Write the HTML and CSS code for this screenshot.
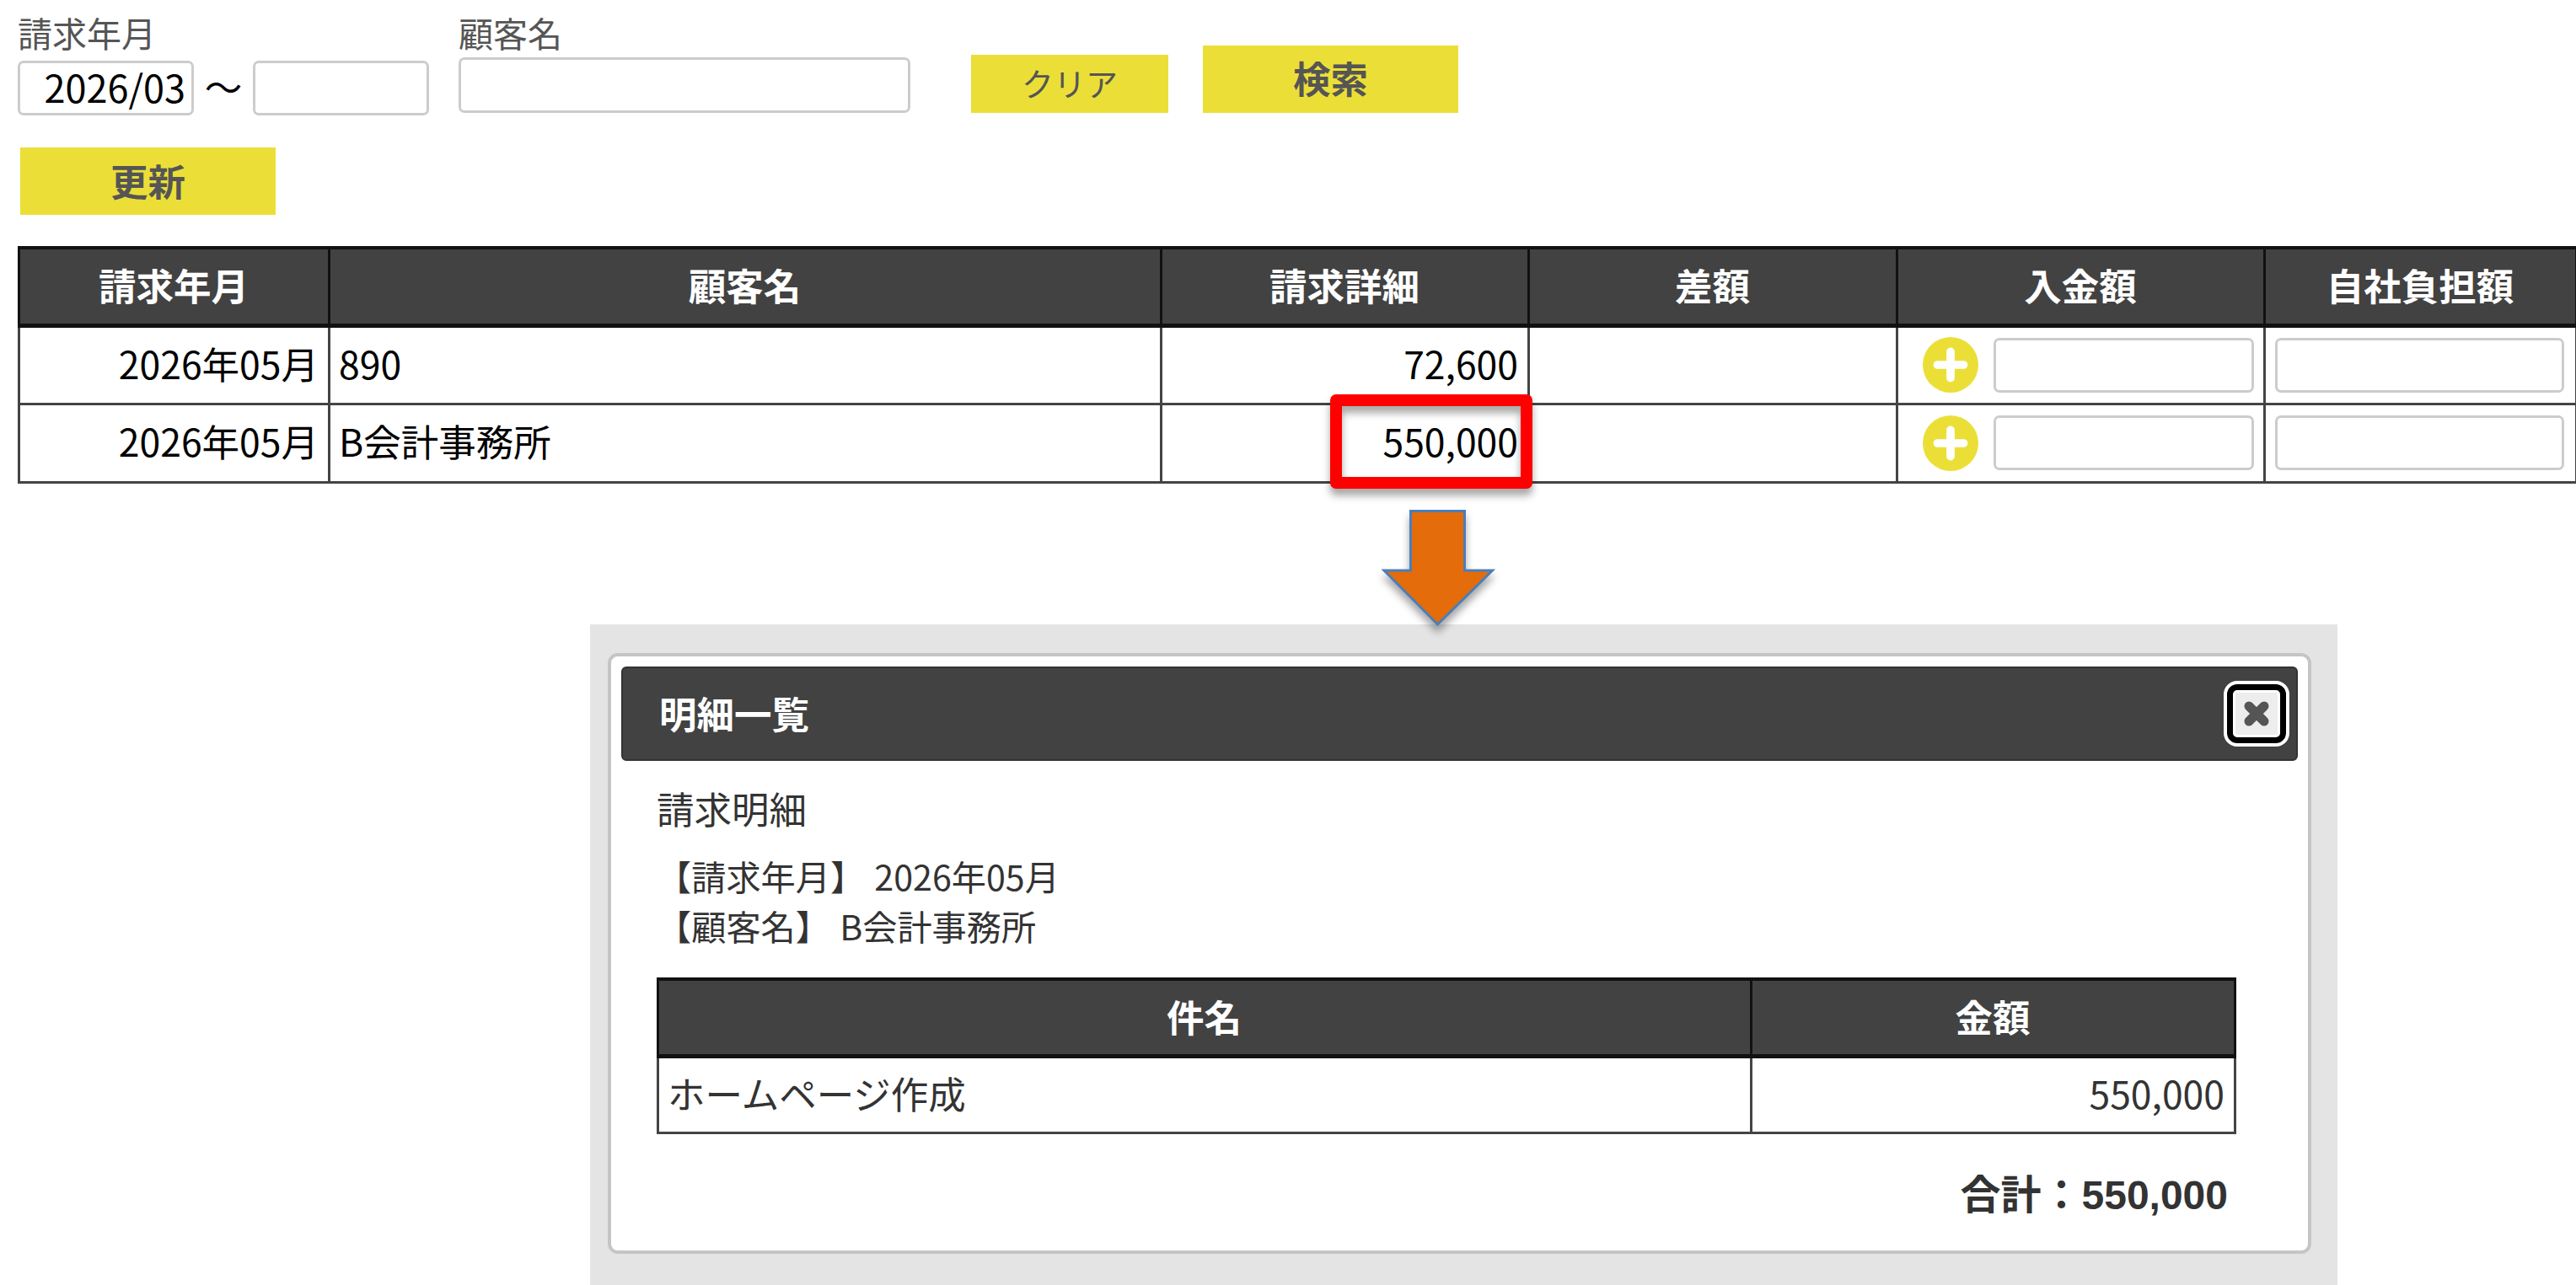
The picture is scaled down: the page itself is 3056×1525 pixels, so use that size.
FILE: index.html
```
<!DOCTYPE html>
<html lang="ja">
<head>
    <meta charset="UTF-8">
    <title>請求一覧</title>
    <link rel="stylesheet" href="styles.css">
</head>
<body>
    <!-- 検索条件 -->
    <form class="search">
        <div class="field period">
            <label>請求年月</label>
            <div class="range">
                <input type="text" class="ym" value="2026/03">
                <span class="tilde">～</span>
                <input type="text" class="ym">
            </div>
        </div>
        <div class="field customer">
            <label>顧客名</label>
            <input type="text">
        </div>
        <button type="button" class="btn btn-clear">クリア</button>
        <button type="button" class="btn btn-search">検索</button>
    </form>
    <button type="button" class="btn btn-update">更新</button>

    <!-- 請求一覧 -->
    <table class="list">
        <colgroup>
            <col class="c-ym"><col class="c-name"><col class="c-detail"><col class="c-diff"><col class="c-pay"><col class="c-own">
        </colgroup>
        <thead>
            <tr><th>請求年月</th><th>顧客名</th><th>請求詳細</th><th>差額</th><th>入金額</th><th>自社負担額</th></tr>
        </thead>
        <tbody>
            <tr>
                <td class="num">2026年05月</td>
                <td>890</td>
                <td class="num">72,600</td>
                <td></td>
                <td class="input-cell">
                    <div class="pay">
                        <svg class="plus" viewBox="0 0 68 68"><circle cx="34" cy="34" r="34"/><path d="M34 18v32M18 34h32"/></svg>
                        <input type="text">
                    </div>
                </td>
                <td class="input-cell"><div class="own"><input type="text"></div></td>
            </tr>
            <tr>
                <td class="num">2026年05月</td>
                <td>B会計事務所</td>
                <td class="num">550,000</td>
                <td></td>
                <td class="input-cell">
                    <div class="pay">
                        <svg class="plus" viewBox="0 0 68 68"><circle cx="34" cy="34" r="34"/><path d="M34 18v32M18 34h32"/></svg>
                        <input type="text">
                    </div>
                </td>
                <td class="input-cell"><div class="own"><input type="text"></div></td>
            </tr>
        </tbody>
    </table>

    <!-- 明細ダイアログ -->
    <div class="backdrop">
        <div class="dialog">
            <div class="titlebar">
                <span>明細一覧</span>
                <button type="button" class="close">
                    <svg viewBox="0 0 32 32"><path d="M7 7l18 18M25 7L7 25"/></svg>
                </button>
            </div>
            <div class="content">
                <h2>請求明細</h2>
                <p>【請求年月】 2026年05月</p>
                <p>【顧客名】 B会計事務所</p>
                <table class="detail">
                    <colgroup><col class="c-item"><col class="c-amount"></colgroup>
                    <thead>
                        <tr><th>件名</th><th>金額</th></tr>
                    </thead>
                    <tbody>
                        <tr><td>ホームページ作成</td><td class="num">550,000</td></tr>
                    </tbody>
                </table>
                <div class="total">合計：550,000</div>
            </div>
        </div>
    </div>

    <!-- 説明用の枠と矢印 -->
    <div class="mark"></div>
    <svg class="arrow" viewBox="0 0 136 140"><path d="M35.500 1.500H99.500V72H132.500L67.500 136L4 72H35.500Z"/></svg>
</body>
</html>
```
FILE: styles.css
```
* {
    box-sizing: border-box;
}

body {
    position: relative;
    margin: 0;
    width: 3056px;
    height: 1525px;
    overflow: hidden;
    background: #fff;
    color: #000;
    font-family: "Noto Sans CJK JP", sans-serif;
    font-size: 44.5px;
    line-height: 1;
}

input {
    height: 65px;
    margin: 0;
    padding: 0 7px 5px;
    border: 3px solid #ccc;
    border-radius: 7px;
    background: #fff;
    color: #000;
    font: inherit;
    text-align: right;
}

/* 検索条件 */
.search {
    display: flex;
    align-items: flex-start;
    height: 175px;
    padding: 7px 0 0 21px;
}

.field label {
    display: block;
    height: 65px;
    color: #555;
    font-size: 41px;
    line-height: 62px;
}

.range {
    display: flex;
    align-items: center;
}

.ym {
    width: 209px;
    font-size: 45px;
}

.tilde {
    width: 70px;
    padding-bottom: 5px;
    text-align: center;
}

.customer {
    margin-left: 35px;
}

.customer label {
    height: 61px;
}

.customer input {
    display: block;
    width: 536px;
    height: 66px;
}

.btn {
    display: flex;
    align-items: center;
    justify-content: center;
    width: 303px;
    height: 80px;
    padding: 0 0 2px;
    border: 0;
    background: #ebdf37;
    color: #555;
    font-family: inherit;
    font-size: 44.5px;
    font-weight: bold;
    line-height: 1;
}

.btn-clear {
    width: 234px;
    height: 69px;
    margin: 58px 0 0 72px;
    padding-bottom: 4px;
    font-size: 38px;
    font-weight: normal;
}

.btn-search {
    margin: 47px 0 0 41px;
    padding-bottom: 4px;
}

.btn-update {
    margin-left: 24px;
}

/* 一覧表 */
table {
    border-collapse: collapse;
    table-layout: fixed;
}

th {
    padding: 0 1px 3px 0;
    border: 3px solid #111;
    border-top-width: 4px;
    border-bottom-width: 5px;
    background: #424242;
    color: #fff;
    font-weight: bold;
}

td {
    padding: 0 11px 4px 10px;
    border: 3px solid #444;
}

.input-cell {
    padding-bottom: 0;
}

.num {
    text-align: right;
}

.list {
    width: 3034px;
    margin: 37px 0 0 21px;
}

.list th {
    height: 92px;
}

.list td {
    height: 93px;
}

.c-ym { width: 368px; }
.c-name { width: 987px; }
.c-detail { width: 436px; }
.c-diff { width: 437px; }
.c-pay { width: 436px; }
.c-own { width: 370px; }

.pay {
    display: flex;
    align-items: center;
    gap: 18px;
    padding-left: 19px;
}

.pay input {
    width: 309px;
}

.own input {
    display: block;
    width: 343px;
    margin-left: 1px;
}

.plus {
    width: 68px;
    height: 68px;
}

.plus circle {
    fill: #ebdf37;
}

.plus path {
    stroke: #fff;
    stroke-width: 10;
    stroke-linecap: round;
}

/* ダイアログ */
.backdrop {
    width: 2073px;
    height: 784px;
    margin: 167px 0 0 700px;
    padding: 34px 0 0 21px;
    background: #e4e4e4;
}

.dialog {
    width: 2021px;
    height: 713px;
    padding: 12px;
    border: 4px solid #c5c5c5;
    border-radius: 12px;
    background: #fff;
    color: #333;
}

.titlebar {
    display: flex;
    align-items: center;
    justify-content: space-between;
    height: 112px;
    padding: 0 12px 0 43px;
    border: 2px solid #333;
    border-radius: 6px;
    background: #424242;
    color: #fff;
    font-weight: bold;
}

.close {
    display: flex;
    align-items: center;
    justify-content: center;
    width: 70px;
    height: 70px;
    padding: 0;
    border: 7px solid #000;
    border-radius: 12px;
    outline: 4px solid #fff;
    background: #ededed;
    box-shadow: inset 0 0 0 3px #fff;
}

.close svg {
    width: 32px;
    height: 32px;
}

.close path {
    stroke: #555;
    stroke-width: 11;
    stroke-linecap: round;
}

.content {
    padding: 31px 73px 0 42px;
}

.content h2 {
    margin: 0 0 26px;
    font-size: 44.5px;
    font-weight: normal;
    line-height: 50px;
}

.content p {
    margin: 0;
    font-size: 41.2px;
    line-height: 59px;
    word-spacing: 2px;
}

.detail {
    width: 1871px;
    margin-top: 32px;
}

.detail th {
    height: 92px;
}

.detail td {
    height: 91px;
}

.c-item { width: 1297px; }
.c-amount { width: 574px; }

.total {
    margin-top: 49px;
    padding-right: 10px;
    font-family: "Liberation Sans", "Noto Sans CJK JP", sans-serif;
    font-size: 48px;
    font-weight: bold;
    text-align: right;
}

/* 強調枠・矢印 */
.mark {
    position: absolute;
    top: 468px;
    left: 1578px;
    width: 240px;
    height: 112px;
    border: 14px solid #f00;
    border-radius: 7px;
    filter: drop-shadow(0 8px 5px rgba(0, 0, 0, 0.35));
}

.arrow {
    position: absolute;
    top: 605px;
    left: 1638px;
    width: 136px;
    height: 140px;
    overflow: visible;
    filter: drop-shadow(0 8px 5px rgba(0, 0, 0, 0.35));
}

.arrow path {
    fill: #e46c0a;
    stroke: #4a7ebb;
    stroke-width: 3;
}
```
